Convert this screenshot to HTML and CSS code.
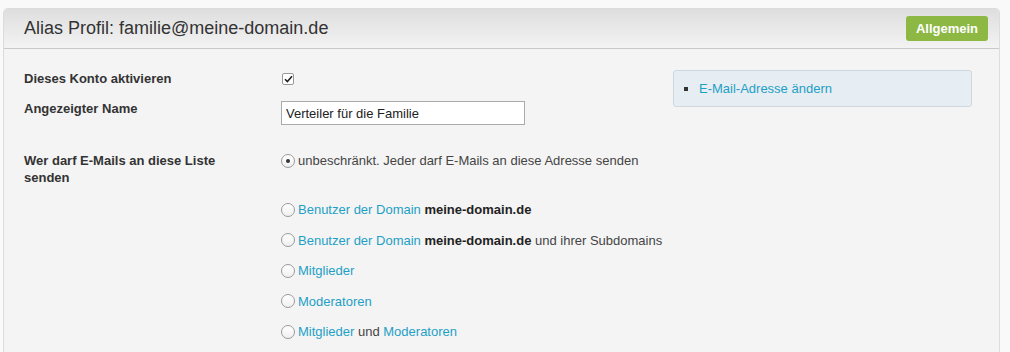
FILE: index.html
```html
<!DOCTYPE html>
<html lang="de">
<head>
    <meta charset="UTF-8">
    <title>Alias Profil</title>
    <link rel="stylesheet" href="styles.css">
</head>
<body>
    <div class="panel">
        <div class="panel-head">
            <h1>Alias Profil: familie@meine-domain.de</h1>
            <span class="tab">Allgemein</span>
        </div>
        <div class="panel-body">
            <div class="form">
                <div class="row row-check">
                    <label>Dieses Konto aktivieren</label>
                    <div class="field"><span class="check"><svg width="9" height="8" viewBox="0 0 9 8"><path d="M1 4.2 L3.4 6.6 L8 1.2" fill="none" stroke="#222" stroke-width="1.6"/></svg></span></div>
                </div>
                <div class="row row-name">
                    <label>Angezeigter Name</label>
                    <div class="field"><input type="text" value="Verteiler für die Familie"></div>
                </div>
                <div class="row row-radios">
                    <label>Wer darf E-Mails an diese Liste senden</label>
                    <div class="field">
                        <div class="radio first"><span class="dot on"></span>unbeschränkt. Jeder darf E-Mails an diese Adresse senden</div>
                        <div class="radio"><span class="dot"></span><a href="#">Benutzer der Domain</a>&nbsp;<b>meine-domain.de</b></div>
                        <div class="radio"><span class="dot"></span><a href="#">Benutzer der Domain</a>&nbsp;<b>meine-domain.de</b>&nbsp;und ihrer Subdomains</div>
                        <div class="radio"><span class="dot"></span><a href="#">Mitglieder</a></div>
                        <div class="radio"><span class="dot"></span><a href="#">Moderatoren</a></div>
                        <div class="radio"><span class="dot"></span><a href="#">Mitglieder</a>&nbsp;und&nbsp;<a href="#">Moderatoren</a></div>
                    </div>
                </div>
            </div>
            <div class="aside">
                <ul class="actions">
                    <li><a href="#">E-Mail-Adresse ändern</a></li>
                </ul>
            </div>
        </div>
    </div>
</body>
</html>
```

FILE: styles.css
```css
body {
    margin: 0;
    padding: 8px 10px 0 3px;
    background-color: #f9f9f9;
    font-family: "Liberation Sans", Arial, sans-serif;
    font-size: 13px;
    color: #444;
}

a {
    color: #1ea0c6;
    text-decoration: none;
}

.panel {
    background-color: #f4f4f4;
    border: 1px solid #dcdcdc;
    border-bottom: none;
    border-radius: 5px 5px 0 0;
    height: 343px;
}

.panel-head {
    height: 39px;
    display: flex;
    align-items: center;
    justify-content: space-between;
    padding: 0 11px 0 20px;
    background: linear-gradient(#dedede, #f3f3f3);
    border-bottom: 1px solid #c9c9c9;
    border-radius: 4px 4px 0 0;
}

.panel-head h1 {
    margin: 0;
    font-size: 18px;
    font-weight: normal;
    color: #333;
}

.tab {
    background-color: #8cb843;
    color: #fff;
    font-weight: bold;
    font-size: 13px;
    padding: 5px 10px 5px;
    border-radius: 3px;
}

.panel-body {
    display: flex;
    padding: 17px 0 0 20px;
}

.form {
    width: 649px;
}

.row {
    display: grid;
    grid-template-columns: 257px 1fr;
}

.row label {
    font-weight: bold;
    color: #333;
    padding-right: 20px;
}

.row-check {
    height: 25px;
    align-items: center;
}

.check {
    display: inline-flex;
    align-items: center;
    justify-content: center;
    width: 10px;
    height: 10px;
    margin-left: 1px;
    border: 1px solid #999;
    border-radius: 2px;
    background-color: #fff;
}

.row-name {
    margin-top: 10px;
    height: 24px;
}

.row-name label {
    line-height: 16px;
}

.row-name input {
    box-sizing: border-box;
    width: 244px;
    height: 24px;
    margin: 0;
    padding: 0 4px;
    border: 1px solid #aaa;
    background-color: #fff;
    font-family: inherit;
    font-size: 13px;
    color: #222;
}

.row-radios {
    margin-top: 27px;
}

.row-radios label {
    line-height: 17px;
}

.radio {
    display: flex;
    align-items: center;
    height: 17px;
    margin-bottom: 13.5px;
}

.radio.first {
    margin-bottom: 32px;
}

.radio b {
    color: #222;
}

.dot {
    box-sizing: border-box;
    width: 14px;
    height: 14px;
    margin-right: 3px;
    border: 1px solid #9a9a9a;
    border-radius: 50%;
    background: linear-gradient(#fff, #f0f0f0);
    display: inline-flex;
    align-items: center;
    justify-content: center;
}

.dot.on::after {
    content: '';
    width: 4px;
    height: 4px;
    border-radius: 50%;
    background-color: #333;
}

.aside {
    width: 299px;
    margin-top: 4px;
}

.actions {
    margin: 0;
    padding: 9px 10px 9px 25px;
    background-color: #e6edf3;
    border: 1px solid #cfd8df;
    border-radius: 3px;
    list-style: square;
    line-height: 16px;
}

.actions li::marker {
    color: #333;
    font-size: 14px;
}
```
